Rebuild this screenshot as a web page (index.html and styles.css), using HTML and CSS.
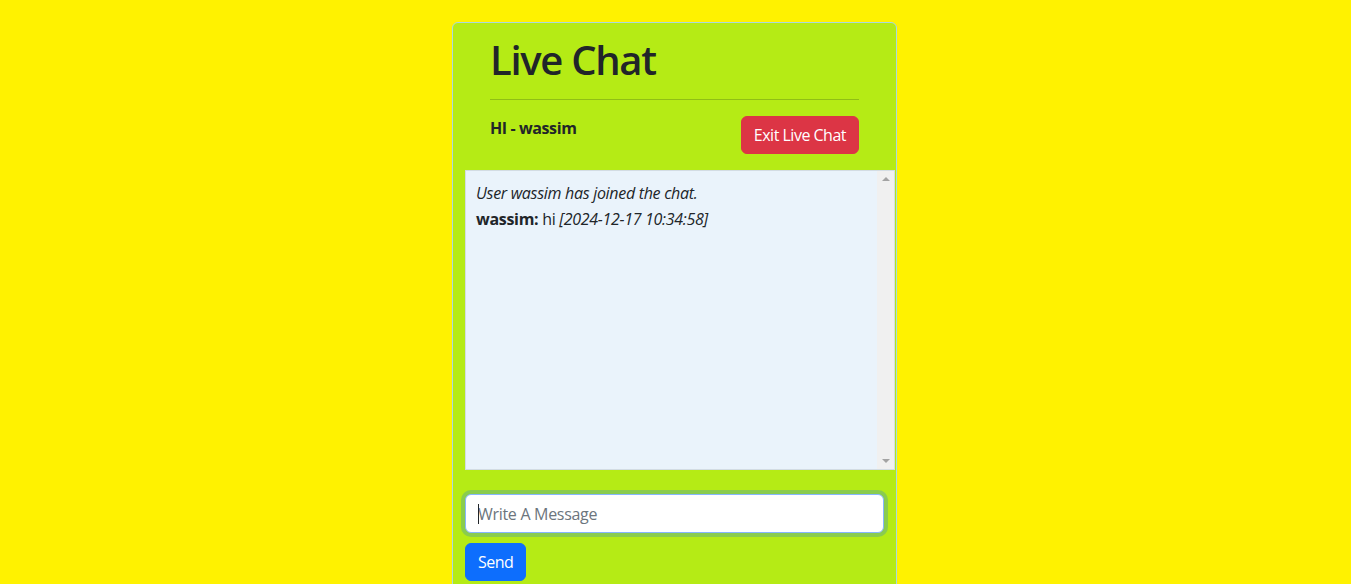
FILE: index.html
```html
<!DOCTYPE html>
<html lang="en">
<head>
<meta charset="utf-8">
<title>Live Chat</title>
<link rel="stylesheet" href="styles.css">
</head>
<body>
<main class="card">
  <header class="chat-header">
    <h1 class="title">Live Chat</h1>
    <hr class="divider">
    <div class="user-row">
      <span class="greeting">HI - wassim</span>
      <button class="btn btn-danger" type="button">Exit Live Chat</button>
    </div>
  </header>
  <section class="chat-box">
    <div class="messages">
      <div class="msg system"><em>User wassim has joined the chat.</em></div>
      <div class="msg"><strong>wassim:</strong> hi <em>[2024-12-17 10:34:58]</em></div>
    </div>
    <div class="scrollbar">
      <span class="arrow up"></span>
      <span class="arrow down"></span>
    </div>
  </section>
  <form class="composer">
    <div class="input-wrap">
      <input class="form-control focused" type="text" placeholder="Write A Message" autofocus>
      <span class="caret"></span>
    </div>
    <button class="btn btn-primary" type="button">Send</button>
  </form>
</main>
</body>
</html>
```
FILE: styles.css
```css
* { box-sizing: border-box; }
html, body { margin: 0; padding: 0; }
body {
  background: #fff200;
  font-family: "Open Sans", "Noto Sans", sans-serif;
  font-size: 16px;
  line-height: 1.5;
  color: #212529;
  min-height: 584px;
}
.card {
  width: 445px;
  margin: 22px 0 0 calc(50% - 223.5px);
  background: #b5eb15;
  border: 1px solid #a9d9e0;
  border-radius: 6px;
  padding: 12px 12px 40px;
}
.chat-header { padding: 0 25px; }
.title {
  margin: 0;
  font-size: 40px;
  font-weight: 600;
  line-height: 50px;
  letter-spacing: -1.3px;
}
.divider {
  margin: 14px 0 16px;
  border: 0;
  border-top: 1px solid rgba(60, 90, 20, 0.3);
}
.user-row {
  display: flex;
  justify-content: space-between;
  align-items: flex-start;
  margin-bottom: 16px;
}
.greeting { font-weight: 700; letter-spacing: -0.4px; }
.btn {
  font-family: inherit;
  font-size: 16px;
  line-height: 24px;
  padding: 6px 12px;
  border: 1px solid transparent;
  border-radius: 6px;
  color: #fff;
  cursor: pointer;
  letter-spacing: -0.5px;
}
.btn-danger { background: #dc3545; border-color: #dc3545; }
.btn-primary { background: #0d6efd; border-color: #0d6efd; }
.chat-box {
  width: 430px;
  height: 300px;
  display: flex;
  background: #eaf3fb;
  border: 1px solid #d3dce3;
}
.messages { flex: 1; padding: 10px; }
.msg { margin-bottom: 2px; letter-spacing: -0.3px; }
.scrollbar {
  width: 17px;
  background: #f0f0f0;
  display: flex;
  flex-direction: column;
  justify-content: space-between;
  align-items: center;
  padding: 6px 0;
}
.arrow { width: 0; height: 0; border-left: 4px solid transparent; border-right: 4px solid transparent; }
.arrow.up { border-bottom: 4px solid #a3a3a3; }
.arrow.down { border-top: 4px solid #a3a3a3; }
.composer {
  margin-top: 24px;
  display: flex;
  flex-direction: column;
  align-items: flex-start;
  gap: 10px;
}
.input-wrap { position: relative; width: 100%; }
.caret {
  position: absolute;
  left: 13px;
  top: 10px;
  width: 1px;
  height: 20px;
  background: #212529;
}
.form-control {
  display: block;
  width: 100%;
  height: 39px;
  padding: 6px 12px;
  font-family: inherit;
  font-size: 16px;
  color: #212529;
  background: #fff;
  border: 1px solid #dee2e6;
  border-radius: 6px;
  outline: none;
  caret-color: transparent;
  letter-spacing: -0.3px;
}
.form-control::placeholder { color: #6c757d; }
.form-control.focused {
  border-color: #86b7fe;
  box-shadow: 0 0 0 4px rgba(13, 110, 253, 0.25);
}
```
